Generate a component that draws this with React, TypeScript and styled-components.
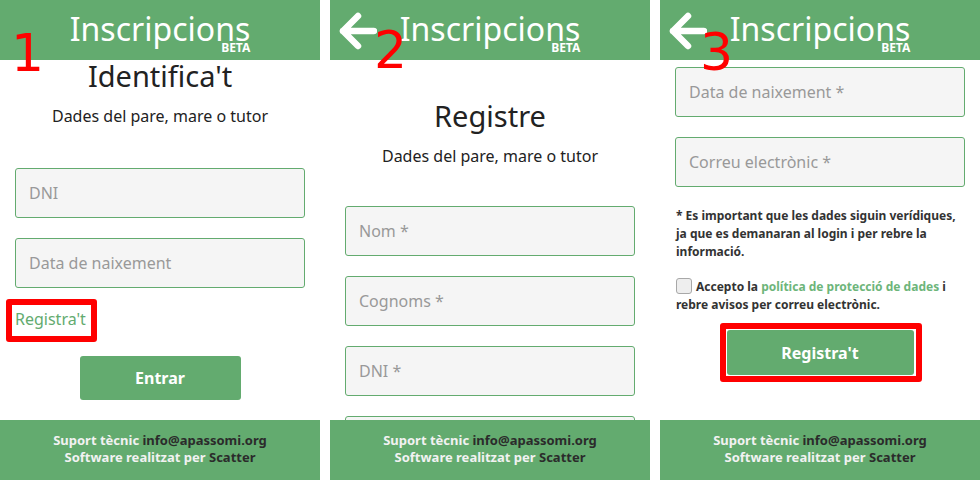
import React from "react";
import styled, { createGlobalStyle } from "styled-components";

const GREEN = "#63ab6f";

const Global = createGlobalStyle`
  html, body { margin: 0; padding: 0; background: #fff; }
  body { font-family: "Noto Sans", "Open Sans", sans-serif; }
  * { box-sizing: border-box; }
`;

const Screens = styled.div`
  display: flex;
  gap: 10px;
  width: 980px;
  height: 480px;
  overflow: hidden;
`;

const Panel = styled.section`
  position: relative;
  width: 320px;
  height: 480px;
  display: flex;
  flex-direction: column;
  background: #fff;
`;

const Header = styled.header`
  height: 60px;
  flex: none;
  background: ${GREEN};
  display: grid;
  grid-template-columns: 1fr auto 1fr;
  align-items: start;
  padding-top: 9px;
`;

const BackSlot = styled.div`
  display: flex;
  align-items: center;
  padding: 3px 0 0 9px;
`;

const TitleBlock = styled.div`
  display: flex;
  flex-direction: column;
  align-items: flex-end;
`;

const Title = styled.div`
  font-size: 32px;
  line-height: 40px;
  color: #fff;
  font-weight: 400;
`;

const Beta = styled.div`
  font-size: 12px;
  line-height: 12px;
  font-weight: 700;
  color: #fff;
  margin-top: -7px;
  margin-right: 0;
`;

const Body = styled.main<{ $top: number }>`
  flex: 1;
  overflow: hidden;
  padding: ${(p) => p.$top}px 15px 0;
  display: flex;
  flex-direction: column;
`;

const Heading = styled.h1`
  margin: 0;
  font-size: 29px;
  line-height: 32px;
  font-weight: 400;
  text-align: center;
  color: #222;
`;

const Sub = styled.p`
  margin: 13px 0 0;
  font-size: 16px;
  line-height: 22px;
  text-align: center;
  color: #222;
`;

const Fields = styled.div<{ $top: number }>`
  display: flex;
  flex-direction: column;
  gap: 20px;
  margin-top: ${(p) => p.$top}px;
`;

const Field = styled.input`
  flex: none;
  width: 290px;
  height: 50px;
  border: 1px solid ${GREEN};
  border-radius: 3px;
  background: #f5f5f5;
  padding: 0 13px;
  font-family: "Noto Sans", sans-serif;
  font-size: 16px;
  color: #333;
  outline: none;
  &::placeholder { color: #999; }
`;

const LinkRow = styled.div`
  position: relative;
  margin-top: 20px;
  align-self: flex-start;
`;

const TextLink = styled.a`
  font-size: 16px;
  line-height: 22px;
  color: ${GREEN};
  text-decoration: none;
  display: block;
`;

const Highlight = styled.span<{ $inset: string }>`
  position: absolute;
  inset: ${(p) => p.$inset};
  border: 6px solid #ff0000;
  border-radius: 3px;
  pointer-events: none;
`;

const ButtonWrap = styled.div<{ $top: number }>`
  position: relative;
  align-self: center;
  margin-top: ${(p) => p.$top}px;
`;

const Button = styled.button<{ $w: number; $h: number }>`
  display: block;
  width: ${(p) => p.$w}px;
  height: ${(p) => p.$h}px;
  border: none;
  border-radius: 3px;
  background: ${GREEN};
  color: #fff;
  font-family: "Noto Sans", sans-serif;
  font-weight: 700;
  font-size: 16px;
`;

const Note = styled.p`
  margin: 20px 0 0;
  padding-left: 1px;
  font-size: 12px;
  line-height: 18px;
  font-weight: 700;
  color: #333;
`;

const Consent = styled.p`
  margin: 17px 0 0;
  padding-left: 1px;
  font-size: 12px;
  line-height: 18px;
  font-weight: 700;
  color: #333;
`;

const Check = styled.span`
  display: inline-block;
  width: 16px;
  height: 16px;
  vertical-align: -3px;
  margin-right: 4px;
  border: 1px solid #a8a8a8;
  border-radius: 3px;
  background: #eeeeee;
`;

const Green = styled.span`
  color: #6db57a;
`;

const Footer = styled.footer`
  height: 60px;
  flex: none;
  background: ${GREEN};
  padding-top: 12px;
  text-align: center;
  font-size: 13px;
  line-height: 17px;
  font-weight: 700;
  color: #f2f2f2;
`;

const Dark = styled.span`
  color: #2b2b2b;
`;

const Step = styled.span<{ $left: number; $top: number }>`
  position: absolute;
  left: ${(p) => p.$left}px;
  top: ${(p) => p.$top}px;
  font-family: "DejaVu Sans", sans-serif;
  font-size: 52px;
  line-height: 52px;
  color: #ff0000;
  pointer-events: none;
`;

const BackArrow = () => (
  <svg width="38" height="38" viewBox="0 0 38 38" fill="none">
    <path
      d="M4 19 H35 M4 19 L19 4 M4 19 L19 34"
      stroke="#fff"
      strokeWidth="6.5"
      strokeLinecap="round"
      strokeLinejoin="round"
    />
  </svg>
);

const AppHeader = ({ back }: { back?: boolean }) => (
  <Header>
    <BackSlot>{back && <BackArrow />}</BackSlot>
    <TitleBlock>
      <Title>Inscripcions</Title>
      <Beta>BETA</Beta>
    </TitleBlock>
    <div />
  </Header>
);

const AppFooter = () => (
  <Footer>
    Suport tècnic <Dark>info@apassomi.org</Dark>
    <br />
    Software realitzat per <Dark>Scatter</Dark>
  </Footer>
);

export default function App() {
  return (
    <>
      <Global />
      <Screens>
        <Panel>
          <AppHeader />
          <Body $top={0}>
            <Heading>Identifica't</Heading>
            <Sub>Dades del pare, mare o tutor</Sub>
            <Fields $top={41}>
              <Field readOnly placeholder="DNI" />
              <Field readOnly placeholder="Data de naixement" />
            </Fields>
            <LinkRow>
              <TextLink>Registra't</TextLink>
              <Highlight $inset="-9px -11px -12px -9px" />
            </LinkRow>
            <ButtonWrap $top={26}>
              <Button $w={161} $h={44}>Entrar</Button>
            </ButtonWrap>
          </Body>
          <AppFooter />
          <Step $left={11} $top={27}>1</Step>
        </Panel>

        <Panel>
          <AppHeader back />
          <Body $top={40}>
            <Heading>Registre</Heading>
            <Sub>Dades del pare, mare o tutor</Sub>
            <Fields $top={39}>
              <Field readOnly placeholder="Nom *" />
              <Field readOnly placeholder="Cognoms *" />
              <Field readOnly placeholder="DNI *" />
              <Field readOnly placeholder="Data de naixement *" />
            </Fields>
          </Body>
          <AppFooter />
          <Step $left={44} $top={24}>2</Step>
        </Panel>

        <Panel>
          <AppHeader back />
          <Body $top={7}>
            <Fields $top={0}>
              <Field readOnly placeholder="Data de naixement *" />
              <Field readOnly placeholder="Correu electrònic *" />
            </Fields>
            <Note>
              * Es important que les dades siguin verídiques, ja que es demanaran al login i per
              rebre la informació.
            </Note>
            <Consent>
              <Check />
              Accepto la <Green>política de protecció de dades</Green> i rebre avisos per correu
              electrònic.
            </Consent>
            <ButtonWrap $top={16}>
              <Button $w={187} $h={45}>Registra't</Button>
              <Highlight $inset="-7px -8px -7px -7px" />
            </ButtonWrap>
          </Body>
          <AppFooter />
          <Step $left={40} $top={26}>3</Step>
        </Panel>
      </Screens>
    </>
  );
}
